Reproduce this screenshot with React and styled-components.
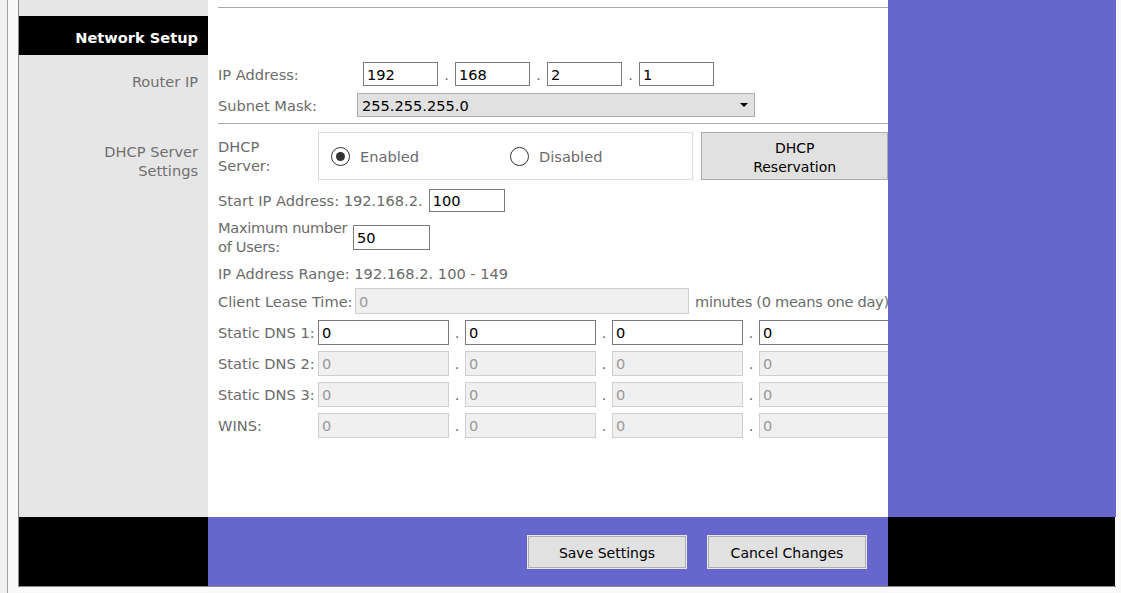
import { createGlobalStyle } from "styled-components";
import styled from "styled-components";

const GlobalStyle = createGlobalStyle`
  html, body {
    margin: 0;
    padding: 0;
    background: #f9f9f9;
  }
  body {
    font-family: "DejaVu Sans", "Liberation Sans", sans-serif;
    font-size: 14.6px;
  }
`;

const PURPLE = "#6666cc";

const Page = styled.div`
  display: flex;
  width: 1121px;
  height: 593px;
  overflow: hidden;
  background: #f9f9f9;
`;

const Gutter = styled.div`
  width: 7px;
  background: #f0f0f0;
  border-right: 1px solid #a0a0a0;
  margin-right: 10px;
`;

const Frame = styled.div`
  display: flex;
  flex-direction: column;
  width: 1097px;
  height: 586px;
  border-left: 1px solid #8a8a8a;
  border-bottom: 1px solid #8a8a8a;
`;

const Body = styled.div`
  display: flex;
  height: 517px;
`;

const Main = styled.div`
  display: flex;
  flex-direction: column;
  width: 869px;
  background: #fff;
`;

const Side = styled.div`
  flex: 1;
  background: ${PURPLE};
`;

const Section = styled.div`
  display: flex;
  height: ${(p) => p.$h}px;
  flex: ${(p) => (p.$grow ? 1 : "none")};
`;

const LabelCell = styled.div`
  width: 189px;
  box-sizing: border-box;
  padding: ${(p) => p.$pt || 0}px 10px 0 0;
  background: ${(p) => (p.$dark ? "#000" : "#e6e6e6")};
  color: ${(p) => (p.$dark ? "#fff" : "#707070")};
  font-weight: ${(p) => (p.$dark ? "bold" : "normal")};
  font-size: 14.6px;
  text-align: right;
  line-height: 19px;
  display: flex;
  flex-direction: column;
  align-items: flex-end;
  justify-content: ${(p) => (p.$dark ? "center" : "flex-start")};
`;

const ContentCell = styled.div`
  width: 680px;
  box-sizing: border-box;
  padding-left: 10px;
  overflow: hidden;
  color: #6b6b6b;
`;

const TopRule = styled.div`
  height: 7px;
  border-bottom: 1px solid #aaa;
`;

const Block = styled.div`
  display: flex;
  flex-direction: column;
  padding-top: ${(p) => p.$pt || 0}px;
  padding-bottom: ${(p) => p.$pb || 0}px;
  border-bottom: ${(p) => (p.$rule ? "1px solid #aaa" : "none")};
`;

const Row = styled.div`
  display: flex;
  align-items: center;
  height: ${(p) => p.$h}px;
  margin-top: ${(p) => p.$mt || 0}px;
  white-space: nowrap;
  line-height: 19px;
`;

const Label = styled.div`
  width: ${(p) => (p.$w ? `${p.$w}px` : "auto")};
  flex: none;
  margin-right: ${(p) => p.$mr || 0}px;
  margin-left: ${(p) => p.$ml || 0}px;
  letter-spacing: ${(p) => (p.$tight ? "-0.3px" : "normal")};
`;

const Field = styled.input`
  box-sizing: border-box;
  flex: none;
  width: ${(p) => p.$w}px;
  height: ${(p) => p.$h || 24}px;
  margin: 0;
  padding: 0 3px;
  font: inherit;
  color: #000;
  background: #fff;
  border: 1px solid #7a7a7a;
  outline: none;
  &:disabled {
    background: #f0f0f0;
    border-color: #cfcfcf;
    color: #9a9a9a;
  }
`;

const Dot = styled.span`
  width: ${(p) => p.$w}px;
  text-align: center;
  flex: none;
`;

const Select = styled.div`
  box-sizing: border-box;
  width: 398px;
  height: 24px;
  margin-left: 36px;
  padding: 0 6px 0 4px;
  display: flex;
  align-items: center;
  justify-content: space-between;
  background: #e1e1e1;
  border: 1px solid #adadad;
  color: #000;
`;

const Caret = styled.span`
  width: 0;
  height: 0;
  border-left: 4px solid transparent;
  border-right: 4px solid transparent;
  border-top: 4px solid #000;
`;

const RadioBox = styled.div`
  box-sizing: border-box;
  width: 376px;
  height: 48px;
  display: flex;
  align-items: center;
  padding-left: 12px;
  border: 1px solid #dcdcdc;
`;

const Option = styled.label`
  display: flex;
  align-items: center;
  width: 179px;
  gap: 10px;
`;

const Radio = styled.span`
  box-sizing: border-box;
  width: 19px;
  height: 19px;
  border-radius: 50%;
  border: 1px solid #333;
  display: flex;
  align-items: center;
  justify-content: center;
  &::after {
    content: "";
    width: 9px;
    height: 9px;
    border-radius: 50%;
    background: ${(p) => (p.$on ? "#333" : "transparent")};
  }
`;

const Button = styled.button`
  box-sizing: border-box;
  width: ${(p) => p.$w}px;
  height: ${(p) => p.$h}px;
  margin: 0 0 0 ${(p) => p.$ml || 0}px;
  padding: ${(p) => p.$pt || 0}px 0 0;
  font: inherit;
  font-size: 14px;
  line-height: 19px;
  color: #000;
  background: #e1e1e1;
  border: 1px solid #adadad;
  box-shadow: ${(p) => (p.$light ? "0 0 0 1px #e8e8e8" : "none")};
`;

const Footer = styled.div`
  display: flex;
  flex: 1;
`;

const FooterSide = styled.div`
  width: ${(p) => p.$w}px;
  background: #000;
`;

const FooterBar = styled.div`
  width: 680px;
  background: ${PURPLE};
  display: flex;
  justify-content: flex-end;
  align-items: flex-start;
  padding: 19px 22px 0 0;
  box-sizing: border-box;
`;

const IpGroup = ({ values, w, dot, h, disabled }) => (
  <>
    {values.map((v, i) => (
      <span key={i} style={{ display: "contents" }}>
        {i > 0 && <Dot $w={dot}>.</Dot>}
        <Field $w={w} $h={h} defaultValue={v} disabled={disabled} />
      </span>
    ))}
  </>
);

const dnsRows = [
  { label: "Static DNS 1:", disabled: false },
  { label: "Static DNS 2:", disabled: true },
  { label: "Static DNS 3:", disabled: true },
  { label: "WINS:", disabled: true },
];

const App = () => {
  return (
    <>
      <GlobalStyle />
      <Page>
        <Gutter />
        <Frame>
          <Body>
            <Main>
              <Section $h={16}>
                <LabelCell />
                <ContentCell>
                  <TopRule />
                </ContentCell>
              </Section>
              <Section $h={39}>
                <LabelCell $dark $pt={3}>Network Setup</LabelCell>
                <ContentCell />
              </Section>
              <Section $h={69}>
                <LabelCell $pt={17}>Router IP</LabelCell>
                <ContentCell>
                  <Block $pt={7} $pb={6} $rule>
                    <Row $h={24}>
                      <Label $w={145}>IP Address:</Label>
                      <IpGroup values={["192", "168", "2", "1"]} w={75} dot={17} />
                    </Row>
                    <Row $h={24} $mt={7}>
                      <Label $w={103}>Subnet Mask:</Label>
                      <Select>
                        255.255.255.0
                        <Caret />
                      </Select>
                    </Row>
                  </Block>
                </ContentCell>
              </Section>
              <Section $grow>
                <LabelCell $pt={18}>
                  <span>DHCP Server</span>
                  <span>Settings</span>
                </LabelCell>
                <ContentCell>
                  <Block $pt={8}>
                    <Row $h={48}>
                      <Label $w={100}>
                        DHCP
                        <br />
                        Server:
                      </Label>
                      <RadioBox>
                        <Option>
                          <Radio $on />
                          Enabled
                        </Option>
                        <Option>
                          <Radio />
                          Disabled
                        </Option>
                      </RadioBox>
                      <Button $w={187} $h={48} $ml={8} $pt={3}>
                        DHCP
                        <br />
                        Reservation
                      </Button>
                    </Row>
                    <Row $h={24} $mt={8}>
                      <Label $mr={6}>Start IP Address: 192.168.2.</Label>
                      <Field $w={76} $h={23} defaultValue="100" />
                    </Row>
                    <Row $h={38} $mt={6}>
                      <Label $w={135} $tight>
                        Maximum number
                        <br />
                        of Users:
                      </Label>
                      <Field $w={77} $h={25} defaultValue="50" />
                    </Row>
                    <Row $h={24} $mt={5}>
                      <Label>IP Address Range: 192.168.2. 100 - 149</Label>
                    </Row>
                    <Row $h={26} $mt={3}>
                      <Label $w={137}>Client Lease Time:</Label>
                      <Field $w={334} $h={26} defaultValue="0" disabled />
                      <Label $ml={6} $tight>minutes (0 means one day)</Label>
                    </Row>
                    {dnsRows.map((r) => (
                      <Row key={r.label} $h={25} $mt={6}>
                        <Label $w={100}>{r.label}</Label>
                        <IpGroup
                          values={["0", "0", "0", "0"]}
                          w={131}
                          h={25}
                          dot={16}
                          disabled={r.disabled}
                        />
                      </Row>
                    ))}
                  </Block>
                </ContentCell>
              </Section>
            </Main>
            <Side />
          </Body>
          <Footer>
            <FooterSide $w={189} />
            <FooterBar>
              <Button $w={158} $h={32} $pt={2} $light>
                Save Settings
              </Button>
              <Button $w={158} $h={32} $ml={22} $pt={2} $light>
                Cancel Changes
              </Button>
            </FooterBar>
            <FooterSide $w={227} />
          </Footer>
        </Frame>
      </Page>
    </>
  );
};

export default App;
